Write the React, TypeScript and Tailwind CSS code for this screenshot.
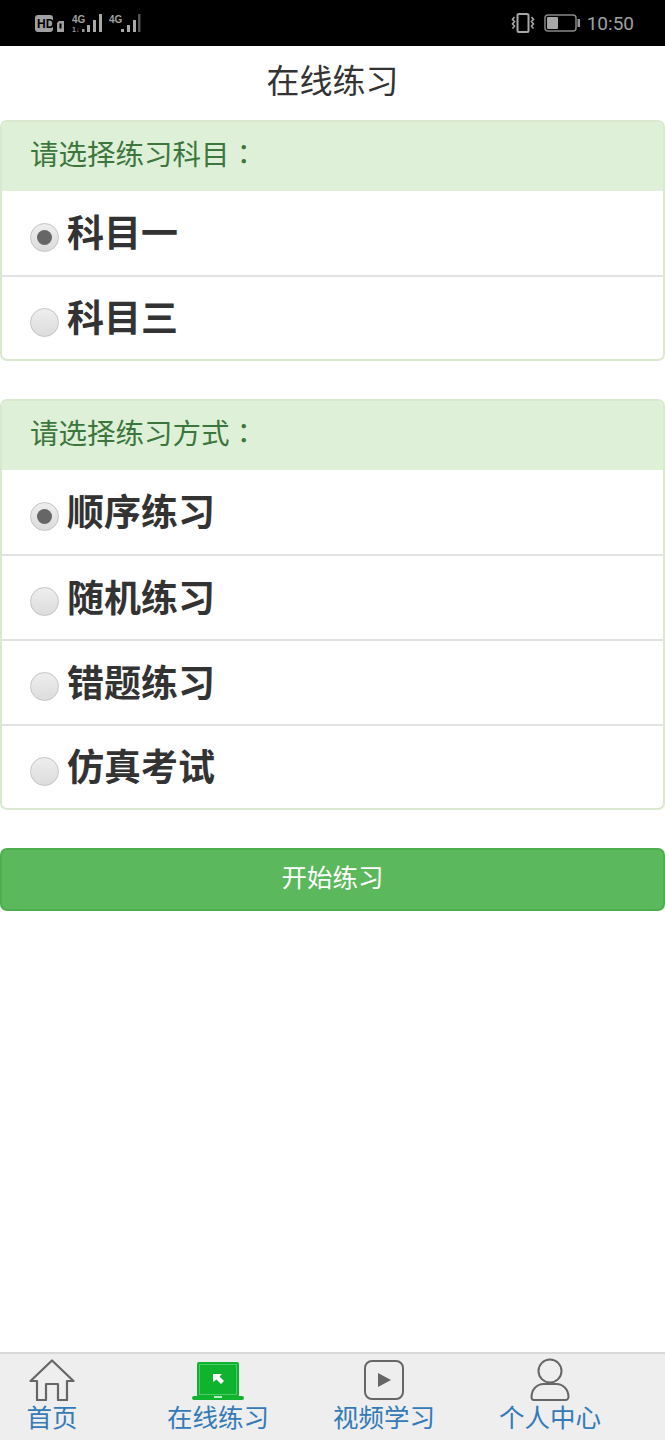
import React from 'react'

function Radio({ checked }: { checked?: boolean }) {
    return (
        <span className="w-[29px] h-[29px] mt-[8px] rounded-full border border-[#c4c4c4] bg-gradient-to-b from-[#eeeeee] to-[#dcdcdc] flex items-center justify-center shrink-0">
            {checked && <span className="w-[15px] h-[15px] rounded-full bg-[#666666]" />}
        </span>
    )
}

function Panel({ title, options }: { title: string; options: string[] }) {
    return (
        <div className="border-2 border-[#d9e8cf] rounded-[7px] overflow-hidden bg-white">
            <div className="h-[69px] bg-[#dff0d8] text-[#3c763d] text-[28.5px] pl-[28px] pb-[6px] flex items-center leading-none">
                {title}
                <span style={{ fontFamily: '"Noto Sans CJK TC", sans-serif' }}>：</span>
            </div>
            {options.map((o, i) => (
                <div
                    key={o}
                    className={
                        'flex items-center pl-[28px] gap-[8px] ' +
                        (i > 0 ? 'border-t-2 border-[#e2e2e2] ' : '') +
                        (i === 0 || i === options.length - 1 ? 'h-[84px]' : 'h-[85px]')
                    }
                >
                    <Radio checked={i === 0} />
                    <span className="text-[37px] font-bold text-[#333333] leading-none pb-[3px]">{o}</span>
                </div>
            ))}
        </div>
    )
}

function Tab({ label, children }: { label: string; children: React.ReactNode }) {
    return (
        <div className="w-[166px] flex flex-col items-center">
            <div className="h-[43px] flex items-end">{children}</div>
            <span className="text-[25.5px] leading-[30px] text-[#337ab7] whitespace-nowrap">{label}</span>
        </div>
    )
}

export default function App() {
    return (
        <div className="h-[1440px] w-[665px] flex flex-col bg-white overflow-hidden" style={{ fontFamily: '"Noto Sans CJK SC", "Liberation Sans", sans-serif' }}>
            {/* Status bar */}
            <div className="h-[46px] bg-black shrink-0 flex items-center justify-between pl-[34px] pr-[31px] text-[#a0a0a0]">
                <svg width="108" height="24" viewBox="0 0 108 24" fill="none">
                    <rect x="1" y="4" width="18" height="17" rx="3" fill="#a0a0a0" />
                    <text x="3" y="17" fontSize="12" fontWeight="700" fill="#000" fontFamily="Liberation Sans">HD</text>
                    <path d="M23 12l2-2h5v11h-7z" fill="#a0a0a0" />
                    <rect x="25.500" y="12.500" width="2" height="5" fill="#000" />
                    <text x="38" y="12" fontSize="10" fontWeight="700" fill="#a0a0a0" fontFamily="Liberation Sans">4G</text>
                    <text x="38" y="21" fontSize="7" fontWeight="700" fill="#999" fontFamily="Liberation Sans">1↓</text>
                    <rect x="48" y="18" width="2.500" height="3" fill="#999" />
                    <rect x="53" y="14" width="3" height="7" fill="#a8a8a8" />
                    <rect x="59" y="9" width="3" height="12" fill="#a8a8a8" />
                    <rect x="65" y="3" width="3" height="18" fill="#a8a8a8" />
                    <text x="75" y="12" fontSize="10" fontWeight="700" fill="#a0a0a0" fontFamily="Liberation Sans">4G</text>
                    <rect x="87" y="18" width="3" height="3" fill="#a8a8a8" />
                    <rect x="93" y="14" width="3" height="7" fill="#a8a8a8" />
                    <rect x="99" y="9" width="3" height="12" fill="#a8a8a8" />
                    <rect x="104" y="3" width="2.500" height="18" fill="#555" />
                </svg>
                <div className="flex items-center">
                    <svg width="24" height="20" viewBox="0 0 24 20" fill="none" stroke="#a8a8a8" className="mr-[9px]">
                        <rect x="6.500" y="1" width="11" height="18" rx="1.500" strokeWidth="2" />
                        <path d="M3.500 4l-2 2.500 2 2-2 2.500 2 2-2 2.500M20.500 4l2 2.500-2 2 2 2.500-2 2 2 2.500" strokeWidth="1.600" />
                    </svg>
                    <svg width="36" height="18" viewBox="0 0 36 18" fill="none" className="mr-[7px]">
                        <rect x="1" y="1" width="31" height="16" rx="3" stroke="#888" strokeWidth="1.500" />
                        <rect x="3" y="3" width="11" height="12" rx="1" fill="#a8a8a8" />
                        <rect x="33.500" y="5" width="2.500" height="8" fill="#999" />
                    </svg>
                    <span className="text-[19px] leading-none" style={{ fontFamily: 'Roboto, sans-serif' }}>10:50</span>
                </div>
            </div>

            {/* Title */}
            <div className="h-[74px] shrink-0 flex items-center justify-center text-[33px] text-[#333333] leading-none pb-[7px]">在线练习</div>

            <div className="flex flex-col gap-[38px] shrink-0">
                <Panel title="请选择练习科目" options={['科目一', '科目三']} />
                <Panel title="请选择练习方式" options={['顺序练习', '随机练习', '错题练习', '仿真考试']} />
                <button className="h-[63px] bg-[#5cb85c] border-2 border-[#4cae4c] rounded-[7px] text-white text-[25.5px] leading-none pb-[7px]">开始练习</button>
            </div>

            <div className="flex-1" />

            {/* Tab bar */}
            <div className="h-[88px] shrink-0 bg-[#eeeeee] border-t-2 border-[#d8d8d8] flex -ml-[31px] pt-[4px]">
                <Tab label="首页">
                    <svg width="46" height="42" viewBox="0 0 46 42" fill="none" stroke="#666666" strokeWidth="2.200">
                        <path d="M1.500 22L23 1.500 44.500 22h-6.500v19H29V25H17v16H8V22z" strokeLinejoin="round" />
                    </svg>
                </Tab>
                <Tab label="在线练习">
                    <svg width="52" height="38" viewBox="0 0 52 38" className="mb-[1px]">
                        <rect x="5" y="0" width="42" height="35" rx="2" fill="#0fb32d" />
                        <rect x="7.500" y="2.500" width="37" height="30" fill="none" stroke="#5bd074" strokeWidth="0.800" />
                        <rect x="0" y="34" width="52" height="4" rx="2" fill="#0fb32d" />
                        <rect x="22" y="34" width="8" height="2" fill="#b8eec4" />
                        <path d="M21 12h9l-2.500 2.500 4.500 4.500-3 3-4.500-4.500L21 20z" fill="#ffffff" />
                    </svg>
                </Tab>
                <Tab label="视频学习">
                    <svg width="40" height="41" viewBox="0 0 40 41" fill="none">
                        <rect x="1" y="1" width="38" height="38" rx="7" stroke="#666666" strokeWidth="2" />
                        <path d="M14 13l13 7-13 7z" fill="#666666" />
                    </svg>
                </Tab>
                <Tab label="个人中心">
                    <svg width="40" height="43" viewBox="0 0 40 43" fill="none" stroke="#666666" strokeWidth="2">
                        <circle cx="20" cy="13" r="11.500" />
                        <path d="M1.500 39c0-8 6-13 12-13h13c6 0 12 5 12 13 0 1-1 3-3 3H4c-2 0-2.500-2-2.500-3z" />
                    </svg>
                </Tab>
            </div>
        </div>
    )
}
